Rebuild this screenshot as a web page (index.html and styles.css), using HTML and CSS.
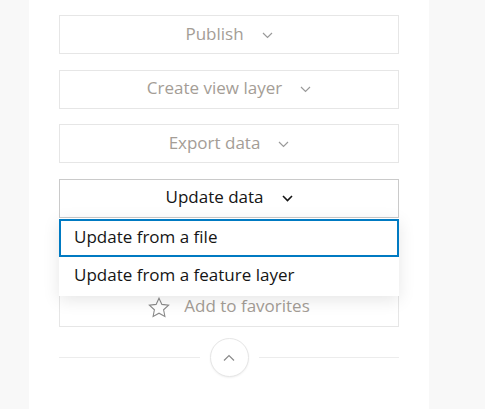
FILE: index.html
```html
<!DOCTYPE html>
<html lang="en">
<head>
<meta charset="utf-8">
<title>Item actions</title>
<link rel="stylesheet" href="styles.css">
</head>
<body>
<div class="panel">
  <div class="actions">
    <button class="btn muted">Publish
      <svg class="chev" width="11" height="7" viewBox="0 0 11 7"><path d="M1 1l4.5 4.5L10 1"/></svg>
    </button>
    <button class="btn muted">Create view layer
      <svg class="chev" width="11" height="7" viewBox="0 0 11 7"><path d="M1 1l4.5 4.5L10 1"/></svg>
    </button>
    <button class="btn muted">Export data
      <svg class="chev" width="11" height="7" viewBox="0 0 11 7"><path d="M1 1l4.5 4.5L10 1"/></svg>
    </button>
    <div class="dd">
      <button class="btn active">Update data
        <svg class="chev dark" width="11" height="7" viewBox="0 0 11 7"><path d="M1 1l4.5 4.5L10 1"/></svg>
      </button>
      <ul class="menu">
        <li class="item focused">Update from a file</li>
        <li class="item">Update from a feature layer</li>
      </ul>
    </div>
    <button class="btn muted">Share</button>
    <button class="btn muted fav">
      <svg class="star" width="22" height="21" viewBox="0 0 22 21"><path d="M11 1.2l2.9 6.2 6.7.8-5 4.6 1.3 6.7L11 16.2l-5.9 3.3 1.3-6.7-5-4.6 6.7-.8z"/></svg>
      Add to favorites
    </button>
  </div>
  <div class="footer">
    <span class="line"></span>
    <button class="circle"><svg width="12" height="8" viewBox="0 0 12 8"><path d="M1 6.5l5-5 5 5"/></svg></button>
    <span class="line"></span>
  </div>
</div>
</body>
</html>
```
FILE: styles.css
```css
html, body {
  margin: 0;
  padding: 0;
}
body {
  background: #f8f8f8;
  font-family: "Open Sans", "Lato", sans-serif;
  height: 409px;
  overflow: hidden;
}
.panel {
  margin-left: 29px;
  width: 400px;
  height: 409px;
  background: #fff;
  box-sizing: border-box;
  padding: 15px 30px 0;
}
.actions {
  display: flex;
  flex-direction: column;
  gap: 15.5px;
}
.btn {
  height: 39px;
  width: 100%;
  box-sizing: border-box;
  border: 1px solid #e6e6e6;
  background: #fff;
  display: flex;
  align-items: center;
  justify-content: center;
  gap: 18px;
  font-family: inherit;
  font-size: 17px;
  font-weight: 400;
  padding: 0 0 3px;
  margin: 0;
}
.muted {
  color: #a49d96;
}
.chev {
  fill: none;
  stroke: #9a9a9a;
  stroke-width: 1.2;
  margin-top: 4px;
}
.chev.dark {
  stroke: #151515;
  stroke-width: 1.6;
}
.dd {
  position: relative;
}
.active {
  color: #151515;
  border-color: #cacaca;
}
.menu {
  position: absolute;
  top: 100%;
  left: 0;
  right: 0;
  margin: 0;
  padding: 0;
  list-style: none;
  background: #fff;
  box-shadow: 0 4px 16px rgba(0, 0, 0, 0.1);
  z-index: 2;
}
.item {
  height: 39px;
  box-sizing: border-box;
  display: flex;
  align-items: center;
  padding: 0 0 3px 15px;
  font-size: 17px;
  color: #151515;
}
.item.focused {
  height: 38px;
  margin-top: 1px;
  border: 2px solid #007ac2;
  padding-left: 13px;
}
.fav {
  gap: 14px;
}
.star {
  fill: none;
  stroke: #8a8a8a;
  stroke-width: 1.1;
  margin-top: 3px;
}
.footer {
  margin-top: 12px;
  display: flex;
  align-items: center;
  height: 38px;
}
.line {
  flex: 1;
  height: 1px;
  background: #ececec;
}
.circle {
  width: 39px;
  height: 39px;
  margin: 0 10px;
  border-radius: 50%;
  border: 1px solid #e6e6e6;
  background: #fff;
  box-shadow: 0 1px 2px rgba(0, 0, 0, 0.06);
  display: flex;
  align-items: center;
  justify-content: center;
  padding: 0;
}
.circle svg {
  fill: none;
  stroke: #8a8a8a;
  stroke-width: 1.2;
}
```
